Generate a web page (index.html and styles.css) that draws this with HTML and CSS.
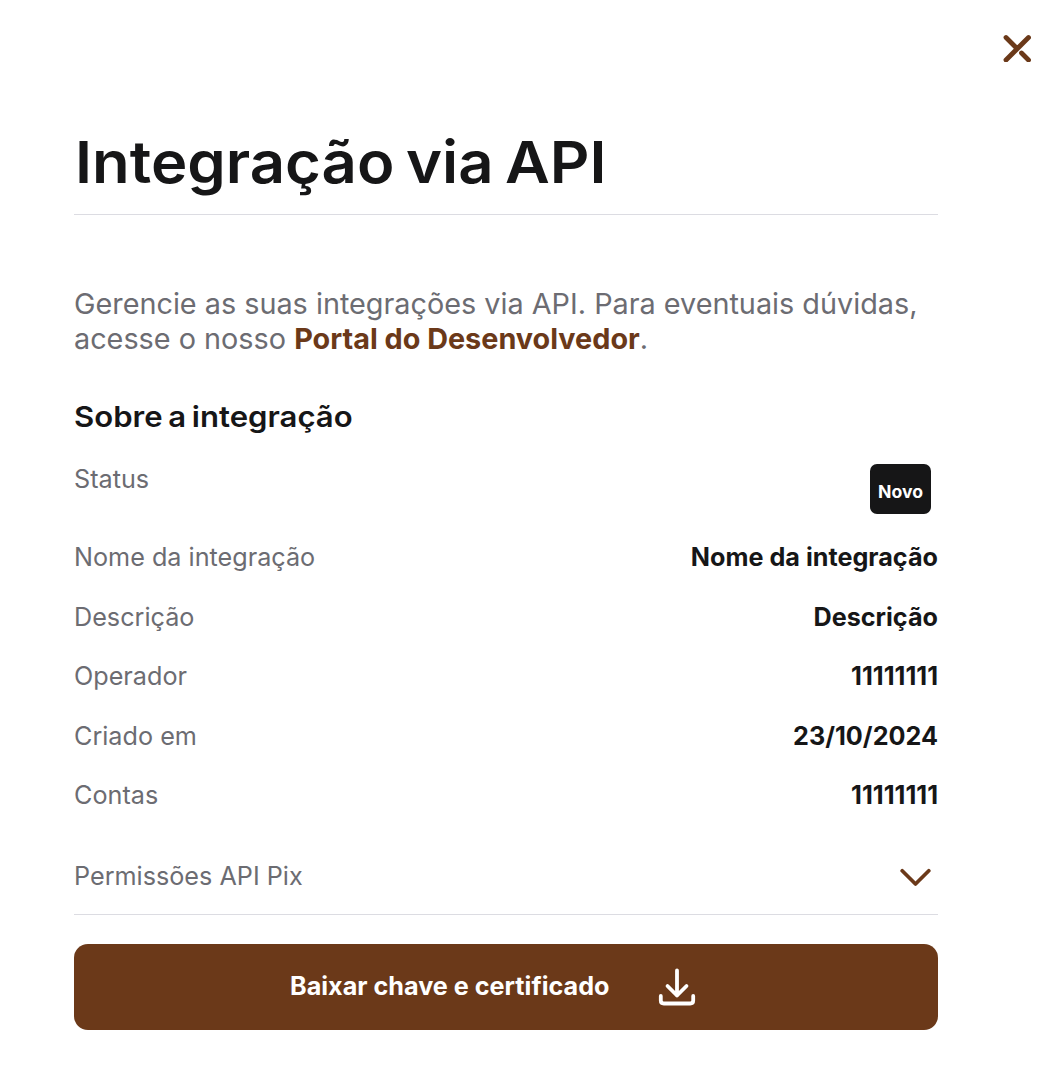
FILE: index.html
```html
<!DOCTYPE html>
<html lang="pt-BR">
<head>
<meta charset="utf-8">
<title>Integração via API</title>
<link rel="stylesheet" href="styles.css">
</head>
<body>
<main class="panel">
  <header class="toolbar">
    <button class="close" aria-label="Fechar">
      <svg width="28" height="28" viewBox="0 0 28 28" fill="none" stroke="currentColor" stroke-width="4.8" stroke-linecap="round"><path d="M3 3.500 13 13.500M3 26 25.500 3.500M18.500 19l7 7"/></svg>
    </button>
  </header>
  <div class="content">
    <h1 class="title"><span class="title-text">Integração via API</span></h1>
    <p class="intro">Gerencie as suas integrações via API. Para eventuais dúvidas,<br>acesse o nosso <a class="link">Portal do Desenvolvedor</a><span>.</span></p>
    <h2 class="subtitle"><span class="subtitle-text">Sobre a integração</span></h2>
    <dl class="details">
      <div class="row row-status"><dt>Status</dt><dd class="badge">Novo</dd></div>
      <div class="row"><dt>Nome da integração</dt><dd>Nome da integração</dd></div>
      <div class="row"><dt>Descrição</dt><dd>Descrição</dd></div>
      <div class="row"><dt>Operador</dt><dd>11111111</dd></div>
      <div class="row"><dt>Criado em</dt><dd>23/10/2024</dd></div>
      <div class="row"><dt>Contas</dt><dd>11111111</dd></div>
    </dl>
    <div class="accordion">
      <span class="accordion-label">Permissões API Pix</span>
      <svg class="chevron" width="32" height="20" viewBox="0 0 32 20" fill="none" stroke="currentColor" stroke-width="3.7" stroke-linecap="round" stroke-linejoin="round"><path d="M3.200 2.700 16.500 16 29.800 2.700"/></svg>
    </div>
    <button class="download">
      <span class="download-label">Baixar chave e certificado</span>
      <svg width="38" height="38" viewBox="0 0 38 38" fill="none" stroke="currentColor" stroke-width="3.8" stroke-linecap="round" stroke-linejoin="round"><path d="M19 2.500v25M9.500 18 19 27.500 28.500 18M2.800 28v4.500q0 3 3 3h26.400q3 0 3-3V28"/></svg>
    </button>
  </div>
</main>
</body>
</html>
```
FILE: styles.css
```css
* { box-sizing: border-box; }
body {
  margin: 0;
  background: #fff;
  color: #161617;
  font-family: Inter, "Liberation Sans", sans-serif;
}
h1, h2, p, dl, dd { margin: 0; }
button { border: 0; padding: 0; font: inherit; }
svg { display: block; flex: none; }
.panel { width: 1060px; height: 1090px; }
.toolbar {
  display: flex;
  justify-content: flex-end;
  height: 124px;
  padding: 34px 29px 0 0;
}
.close { height: 28px; background: none; color: #6b3919; }
.content { width: 864px; margin-left: 74px; }
.title {
  height: 91px;
  padding: 2px 0 0 1px;
  border-bottom: 1px solid #dcdce2;
  font-size: 58px;
  font-weight: 600;
  line-height: 72px;
  white-space: nowrap;
}
.title-text {
  display: inline-block;
  word-spacing: -3.8px;
  transform: scaleX(1.062);
  transform-origin: left;
}
.intro {
  margin-top: 71px;
  color: #6c6c72;
  font-size: 28.8px;
  line-height: 35px;
  white-space: nowrap;
}
.link { color: #6b3919; font-weight: 700; }
.subtitle {
  margin-top: 43px;
  font-size: 29px;
  font-weight: 600;
  line-height: 36px;
}
.subtitle-text {
  display: inline-block;
  word-spacing: -2px;
  transform: scaleX(1.072);
  transform-origin: left;
}
.details {
  display: flex;
  flex-direction: column;
  gap: 28.5px;
  margin-top: 29px;
}
.row {
  display: flex;
  justify-content: space-between;
  height: 31px;
  font-size: 25.2px;
  line-height: 31px;
}
.row dt { color: #6c6c72; }
.row dd { font-weight: 700; }
.row-status { height: 49.5px; }
.row .badge {
  width: 61px;
  height: 50px;
  margin: 0 7px 0 0;
  padding-top: 5px;
  border-radius: 7px;
  background: #161617;
  color: #fff;
  font-size: 17.6px;
  font-weight: 700;
  line-height: 45px;
  text-align: center;
}
.accordion {
  display: flex;
  justify-content: space-between;
  height: 103.5px;
  padding: 50px 7px 0 0;
  border-bottom: 1px solid #dcdce2;
  color: #6c6c72;
  font-size: 25.2px;
  line-height: 31px;
}
.chevron { margin-top: 7px; color: #6b3919; }
.download {
  display: flex;
  align-items: center;
  width: 100%;
  height: 86px;
  margin-top: 29px;
  padding-left: 216px;
  gap: 48px;
  border-radius: 14px;
  background: #6b3919;
  color: #fff;
  font-size: 25.2px;
  font-weight: 700;
}
.download-label { padding-bottom: 2px; }
```
